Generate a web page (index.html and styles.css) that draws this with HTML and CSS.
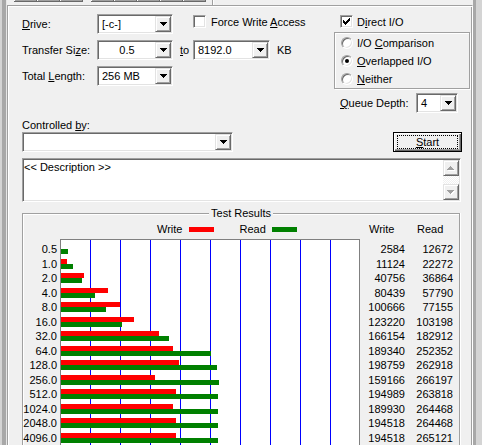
FILE: index.html
```html
<!DOCTYPE html>
<html lang="en">
<head>
<meta charset="utf-8">
<title>ATTO Disk Benchmark</title>
<link rel="stylesheet" href="styles.css">
</head>
<body>
<div class="window">
  <div class="strip-left"></div>
  <div class="main">
    <div class="toolbar">
      <div class="tb-group g1"><span class="tb-btn"></span><span class="tb-btn"></span><span class="tb-btn"></span></div>
      <div class="tb-group g2"><span class="tb-btn"></span><span class="tb-btn"></span><span class="tb-btn"></span><span class="tb-btn"></span><span class="tb-btn"></span></div>
      <div class="tb-sep"></div>
    </div>
    <div class="panel">
      <div class="top">
        <div class="left-col">
          <div class="row">
            <span class="lbl"><u>D</u>rive:</span>
            <div class="combo w76"><span class="val">[-c-]</span><span class="dd"><svg width="7" height="4" viewBox="0 0 7 4" shape-rendering="crispEdges"><path d="M0 0h7v1H0zM1 1h5v1H1zM2 2h3v1H2zM3 3h1v1H3z"/></svg></span></div>
            <div class="check force"><span class="cb"></span><span class="ctext">Force Write <u>A</u>ccess</span></div>
          </div>
          <div class="row">
            <span class="lbl">Transfer Si<u>z</u>e:</span>
            <div class="combo w76"><span class="val center">0.5</span><span class="dd"><svg width="7" height="4" viewBox="0 0 7 4" shape-rendering="crispEdges"><path d="M0 0h7v1H0zM1 1h5v1H1zM2 2h3v1H2zM3 3h1v1H3z"/></svg></span></div>
            <span class="to"><u>t</u>o</span>
            <div class="combo w77"><span class="val">8192.0</span><span class="dd"><svg width="7" height="4" viewBox="0 0 7 4" shape-rendering="crispEdges"><path d="M0 0h7v1H0zM1 1h5v1H1zM2 2h3v1H2zM3 3h1v1H3z"/></svg></span></div>
            <span class="kb">KB</span>
          </div>
          <div class="row">
            <span class="lbl">Total <u>L</u>ength:</span>
            <div class="combo w76"><span class="val">256 MB</span><span class="dd"><svg width="7" height="4" viewBox="0 0 7 4" shape-rendering="crispEdges"><path d="M0 0h7v1H0zM1 1h5v1H1zM2 2h3v1H2zM3 3h1v1H3z"/></svg></span></div>
          </div>
        </div>
        <div class="right-col">
          <div class="check direct"><span class="cb"><svg width="7" height="7" viewBox="0 0 7 7" shape-rendering="crispEdges"><path d="M0 2h1v3H0zM1 3h1v3H1zM2 4h1v3H2zM3 3h1v3H3zM4 2h1v3H4zM5 1h1v3H5zM6 0h1v3H6z"/></svg></span><span class="ctext">D<u>i</u>rect I/O</span></div>
          <div class="radiobox">
            <div class="radio-row"><span class="rb"></span><span class="rtext">I/O <u>C</u>omparison</span></div>
            <div class="radio-row"><span class="rb on"></span><span class="rtext"><u>O</u>verlapped I/O</span></div>
            <div class="radio-row"><span class="rb"></span><span class="rtext"><u>N</u>either</span></div>
          </div>
          <div class="queue">
            <span class="qlbl"><u>Q</u>ueue Depth:</span>
            <div class="combo w42"><span class="val">4</span><span class="dd"><svg width="7" height="4" viewBox="0 0 7 4" shape-rendering="crispEdges"><path d="M0 0h7v1H0zM1 1h5v1H1zM2 2h3v1H2zM3 3h1v1H3z"/></svg></span></div>
          </div>
        </div>
      </div>
      <div class="lower">
        <div class="ctl-lbl">Controlled <u>b</u>y:</div>
        <div class="ctl-row">
          <div class="combo w211"><span class="val"></span><span class="dd"><svg width="7" height="4" viewBox="0 0 7 4" shape-rendering="crispEdges"><path d="M0 0h7v1H0zM1 1h5v1H1zM2 2h3v1H2zM3 3h1v1H3z"/></svg></span></div>
          <button class="btn-start" type="button"><span class="focus"><u>S</u>tart</span></button>
        </div>
        <div class="desc">
          <div class="desc-text">&lt;&lt; Description &gt;&gt;</div>
          <div class="vscroll">
            <span class="sb-btn"><svg width="8" height="5" viewBox="0 0 8 5" shape-rendering="crispEdges"><path fill="#fff" d="M4 1h1v1H4zM3 2h3v1H3zM2 3h5v1H2zM1 4h7v1H1z"/><path fill="#a0a0a0" d="M3 0h1v1H3zM2 1h3v1H2zM1 2h5v1H1zM0 3h7v1H0z"/></svg></span>
            <span class="sb-track"></span>
            <span class="sb-btn"><svg width="8" height="5" viewBox="0 0 8 5" shape-rendering="crispEdges"><path fill="#fff" d="M1 1h7v1H1zM2 2h5v1H2zM3 3h3v1H3zM4 4h1v1H4z"/><path fill="#a0a0a0" d="M0 0h7v1H0zM1 1h5v1H1zM2 2h3v1H2zM3 3h1v1H3z"/></svg></span>
          </div>
        </div>
        <div class="groupbox">
          <div class="gb-title">Test Results</div>
          <div class="chart">
            <div class="col-labels">
              <div class="num">0.5</div><div class="num">1.0</div><div class="num">2.0</div><div class="num">4.0</div><div class="num">8.0</div><div class="num">16.0</div><div class="num">32.0</div><div class="num">64.0</div><div class="num">128.0</div><div class="num">256.0</div><div class="num">512.0</div><div class="num">1024.0</div><div class="num">2048.0</div><div class="num">4096.0</div>
            </div>
            <div class="col-plot">
              <div class="legend"><span>Write</span><span class="lg-bar lg-w"></span><span class="lg-read">Read</span><span class="lg-bar lg-r"></span></div>
              <div class="plot">
                <div class="bar-row"><div class="bar w" style="width:0px"></div><div class="bar r" style="width:6.6px"></div></div>
                <div class="bar-row"><div class="bar w" style="width:5.6px"></div><div class="bar r" style="width:12.3px"></div></div>
                <div class="bar-row"><div class="bar w" style="width:23.3px"></div><div class="bar r" style="width:21px"></div></div>
                <div class="bar-row"><div class="bar w" style="width:47px"></div><div class="bar r" style="width:33.5px"></div></div>
                <div class="bar-row"><div class="bar w" style="width:59.1px"></div><div class="bar r" style="width:45.1px"></div></div>
                <div class="bar-row"><div class="bar w" style="width:72.6px"></div><div class="bar r" style="width:60.6px"></div></div>
                <div class="bar-row"><div class="bar w" style="width:98.2px"></div><div class="bar r" style="width:108.2px"></div></div>
                <div class="bar-row"><div class="bar w" style="width:112px"></div><div class="bar r" style="width:149.7px"></div></div>
                <div class="bar-row"><div class="bar w" style="width:117.7px"></div><div class="bar r" style="width:156px"></div></div>
                <div class="bar-row"><div class="bar w" style="width:94px"></div><div class="bar r" style="width:157.9px"></div></div>
                <div class="bar-row"><div class="bar w" style="width:115.4px"></div><div class="bar r" style="width:156.5px"></div></div>
                <div class="bar-row"><div class="bar w" style="width:112.4px"></div><div class="bar r" style="width:156.9px"></div></div>
                <div class="bar-row"><div class="bar w" style="width:115.1px"></div><div class="bar r" style="width:156.9px"></div></div>
                <div class="bar-row"><div class="bar w" style="width:115.1px"></div><div class="bar r" style="width:157.3px"></div></div>
              </div>
            </div>
            <div class="col-vals col-w">
              <div class="hdr">Write</div>
              <div class="num">2584</div><div class="num">11124</div><div class="num">40756</div><div class="num">80439</div><div class="num">100666</div><div class="num">123220</div><div class="num">166154</div><div class="num">189340</div><div class="num">198759</div><div class="num">159166</div><div class="num">194989</div><div class="num">189930</div><div class="num">194518</div><div class="num">194518</div>
            </div>
            <div class="col-vals col-r">
              <div class="hdr">Read</div>
              <div class="num">12672</div><div class="num">22272</div><div class="num">36864</div><div class="num">57790</div><div class="num">77155</div><div class="num">103198</div><div class="num">182912</div><div class="num">252352</div><div class="num">262918</div><div class="num">266197</div><div class="num">263818</div><div class="num">264468</div><div class="num">264468</div><div class="num">265121</div>
            </div>
          </div>
        </div>
      </div>
    </div>
  </div>
  <div class="strip-right"></div>
</div>
</body>
</html>
```

FILE: styles.css
```css
* { box-sizing: border-box; }
html, body { margin: 0; padding: 0; }
body {
  width: 482px;
  height: 445px;
  overflow: hidden;
  background: #f0f0f0;
  font-family: "Liberation Sans", Arial, sans-serif;
  font-size: 11px;
  color: #000;
}
u { text-decoration: underline; text-decoration-thickness: 1px; text-underline-offset: 1px; }

.window { display: flex; height: 445px; overflow: hidden; }
.strip-left {
  width: 7px; flex: none;
  background: linear-gradient(to right, #d4d4d4 0 2px, #a8a8a8 2px 6px, #e6e6e6 6px 7px);
}
.strip-right {
  width: 9px; flex: none;
  background: linear-gradient(to right, #a8a8a8 0 3px, #d4d4d4 3px);
}
.main { width: 466px; height: 445px; flex: none; display: flex; flex-direction: column; overflow: hidden; }

/* toolbar remnants */
.toolbar { height: 5px; flex: none; display: flex; }
.tb-group { display: flex; height: 2px; }
.g1 { margin-left: 7px; }
.g2 { margin-left: 8px; }
.tb-btn {
  width: 23px; height: 2px;
  border-right: 1px solid #696969;
  border-bottom: 1px solid #696969;
  box-shadow: inset 1px 0 #fff, inset -1px -1px #a0a0a0;
}
.tb-sep { margin-left: 6px; width: 2px; height: 5px; border-left: 1px solid #a0a0a0; border-right: 1px solid #fff; }

/* main panel */
.panel {
  flex: 1;
  min-height: 0;
  overflow: hidden;
  border-top: 1px solid #a0a0a0;
  border-left: 1px solid #a0a0a0;
  border-right: 1px solid #fff;
  box-shadow: inset 1px 1px #fff, inset -1px 0 #a0a0a0;
  padding: 8px 0 0 14px;
}

.top { display: flex; height: 99px; }
.left-col { width: 312px; flex: none; display: flex; flex-direction: column; gap: 6px; }
.right-col { width: 136px; flex: none; display: flex; flex-direction: column; }
.row { display: flex; align-items: center; height: 20px; }
.lbl { width: 75px; flex: none; white-space: nowrap; }
.to { margin-left: 7px; width: 13px; flex: none; }
.kb { margin-left: 7px; }

/* combo boxes */
.combo {
  display: flex; height: 20px; flex: none;
  border: 1px solid; border-color: #a0a0a0 #fff #fff #a0a0a0;
  box-shadow: inset 1px 1px #696969, inset -1px -1px #e3e3e3;
  background: #fff;
  padding: 1px;
}
.w76 { width: 76px; }
.w77 { width: 77px; }
.w42 { width: 42px; }
.w211 { width: 211px; }
.combo .val { flex: 1; line-height: 16px; padding-left: 3px; white-space: nowrap; overflow: hidden; }
.combo .val.center { text-align: center; padding-left: 0; }
.dd {
  width: 16px; height: 16px; flex: none;
  background: #f0f0f0;
  border: 1px solid; border-color: #e3e3e3 #696969 #696969 #e3e3e3;
  box-shadow: inset 1px 1px #fff, inset -1px -1px #a0a0a0;
  display: flex; align-items: center; justify-content: center;
}
.dd svg, .sb-btn svg, .cb svg { display: block; }

/* check boxes */
.check { display: flex; align-items: center; height: 13px; align-self: flex-start; margin-top: 1px; }
.force { margin-left: 20px; }
.direct { margin-left: 6px; }
.cb {
  width: 13px; height: 13px; flex: none;
  background: #fff;
  border: 1px solid; border-color: #a0a0a0 #fff #fff #a0a0a0;
  box-shadow: inset 1px 1px #696969, inset -1px -1px #e3e3e3;
  display: flex; align-items: center; justify-content: center;
}
.ctext { margin-left: 5px; white-space: nowrap; }
.direct .ctext { margin-left: 4px; }

/* radio group */
.radiobox {
  margin-top: 4px;
  height: 57px;
  border: 1px solid #a0a0a0;
  box-shadow: inset 1px 1px #fff, 1px 1px #fff;
  padding: 1px 0 0 6px;
}
.radio-row { display: flex; align-items: center; height: 18px; }
.rb {
  width: 12px; height: 12px; flex: none; border-radius: 50%;
  background: #fff;
  border: 1px solid; border-color: #a0a0a0 #fff #fff #a0a0a0;
  box-shadow: inset 1px 1px #696969, inset -1px -1px #e3e3e3;
  display: flex; align-items: center; justify-content: center;
}
.rb.on::after { content: ""; width: 4px; height: 4px; border-radius: 50%; background: #000; }
.rtext { margin-left: 4px; white-space: nowrap; }

.queue { display: flex; align-items: center; height: 20px; margin: 4px 0 0 6px; }
.qlbl { width: 76px; flex: none; white-space: nowrap; }

/* lower part */
.lower { width: 440px; }
.ctl-lbl { margin-top: 5px; height: 14px; line-height: 14px; }
.ctl-row { display: flex; justify-content: space-between; height: 20px; }
.btn-start {
  width: 69px; height: 20px; margin: 0; padding: 0;
  font: inherit; color: #000;
  background: #f0f0f0;
  border: 1px solid #000;
  box-shadow: inset 1px 1px #fff, inset -1px -1px #696969, inset -2px -2px #a0a0a0;
  display: flex; align-items: center; justify-content: center;
}
.focus {
  width: 61px; height: 14px;
  border: 1px dotted #000;
  display: flex; align-items: center; justify-content: center;
  line-height: 12px;
}

.desc {
  display: flex; width: 439px; height: 44px; margin-top: 6px;
  border: 1px solid; border-color: #a0a0a0 #fff #fff #a0a0a0;
  box-shadow: inset 1px 1px #696969, inset -1px -1px #e3e3e3;
  background: #fff;
  padding: 1px;
}
.desc-text { flex: 1; line-height: 13px; padding-top: 1px; white-space: nowrap; }
.vscroll { width: 16px; flex: none; display: flex; flex-direction: column; }
.sb-btn {
  height: 16px; flex: none;
  background: #f0f0f0;
  border: 1px solid; border-color: #e3e3e3 #696969 #696969 #e3e3e3;
  box-shadow: inset 1px 1px #fff, inset -1px -1px #a0a0a0;
  display: flex; align-items: center; justify-content: center;
}
.sb-track {
  flex: 1;
  background-image: conic-gradient(#fff 25%, #f0f0f0 0 50%, #fff 0 75%, #f0f0f0 0);
  background-size: 2px 2px;
}

/* test results group */
.groupbox {
  width: 438px; height: 236px; margin-top: 11px;
  border: 1px solid #a0a0a0;
  border-bottom: 0;
  box-shadow: inset 1px 1px #fff, 1px 0 #fff;
}
.gb-title {
  width: fit-content;
  margin: -7px auto 0;
  padding: 0 2px;
  background: #f0f0f0;
  line-height: 13px;
}
.chart { display: flex; margin-top: 3px; }
.col-labels { width: 34px; flex: none; padding-top: 21px; }
.col-plot { width: 300px; flex: none; margin-left: 3px; }
.legend { height: 13px; line-height: 13px; display: flex; align-items: center; padding-left: 97px; margin-bottom: 3px; white-space: nowrap; }
.lg-bar { width: 25px; height: 5px; flex: none; }
.lg-w { background: #f00; margin-left: 7px; }
.lg-r { background: #008000; margin-left: 6px; }
.lg-read { margin-left: 25px; }
.plot {
  height: 206px;
  border: 1px solid #808080; border-bottom: 0;
  background-color: #fff;
  background-image: repeating-linear-gradient(to right, transparent 0 29px, #0000ff 29px 30px);
  padding-top: 4px;
}
.bar-row { height: 14.54px; }
.bar { height: 5px; }
.bar.w { background: #f00; }
.bar.r { background: #008000; }
.col-w { width: 45px; flex: none; }
.col-r { width: 48px; flex: none; }
.hdr { height: 13px; line-height: 13px; margin-bottom: 8px; white-space: nowrap; }
.col-w .hdr { padding-left: 9px; }
.col-r .hdr { padding-left: 12px; }
.num { height: 14.54px; line-height: 11px; text-align: right; white-space: nowrap; }
```
